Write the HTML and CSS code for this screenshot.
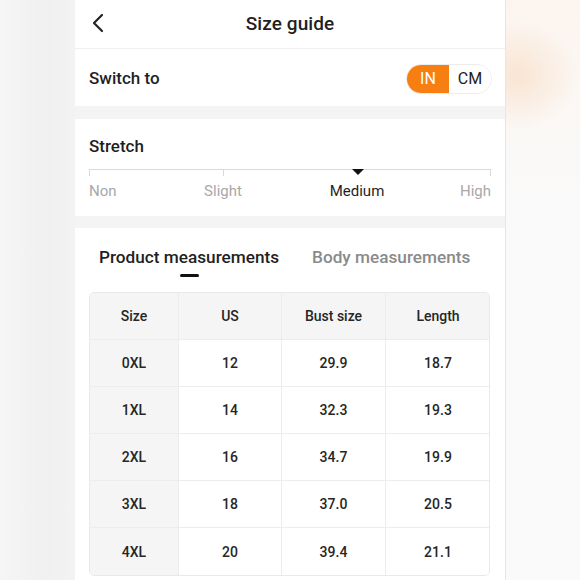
FILE: index.html
```html
<!DOCTYPE html>
<html>
<head>
<meta charset="utf-8">
<link rel="stylesheet" href="styles.css">
</head>
<body>
<div class="stage">
  <div class="phone">
    <header class="topbar">
      <svg class="back" width="12" height="20" viewBox="0 0 12 20"><polyline points="10,2 2,10 10,18" fill="none" stroke="#222" stroke-width="2.2" stroke-linecap="round" stroke-linejoin="round"/></svg>
      <h1 class="title">Size guide</h1>
    </header>
    <section class="switch-row">
      <span class="label">Switch to</span>
      <div class="toggle"><span class="opt on">IN</span><span class="opt">CM</span></div>
    </section>
    <div class="gap"></div>
    <section class="stretch">
      <div class="label">Stretch</div>
      <div class="track">
        <div class="seg"></div><div class="seg tick"></div><div class="seg"></div>
        <span class="marker"></span>
      </div>
      <div class="levels">
        <span class="lv non">Non</span>
        <span class="lv slight">Slight</span>
        <span class="lv medium">Medium</span>
        <span class="lv high">High</span>
      </div>
    </section>
    <div class="gap gap2"></div>
    <section class="measure">
      <div class="tabs">
        <div class="tab active">Product measurements<span class="bar"></span></div>
        <div class="tab">Body measurements</div>
      </div>
      <div class="table">
        <div class="c h first">Size</div><div class="c h">US</div><div class="c h">Bust size</div><div class="c h last">Length</div>
        <div class="c first">0XL</div><div class="c">12</div><div class="c">29.9</div><div class="c last">18.7</div>
        <div class="c first">1XL</div><div class="c">14</div><div class="c">32.3</div><div class="c last">19.3</div>
        <div class="c first">2XL</div><div class="c">16</div><div class="c">34.7</div><div class="c last">19.9</div>
        <div class="c first">3XL</div><div class="c">18</div><div class="c">37.0</div><div class="c last">20.5</div>
        <div class="c first b">4XL</div><div class="c b">20</div><div class="c b">39.4</div><div class="c last b">21.1</div>
      </div>
    </section>
  </div>
</div>
</body>
</html>
```

FILE: styles.css
```css
* { box-sizing: border-box; margin: 0; padding: 0; }
html, body { height: 100%; }
body {
  font-family: Roboto, "Liberation Sans", sans-serif;
  color: #1f1f1f;
  background:
    radial-gradient(ellipse 60px 55px at 518px 75px, rgba(248, 224, 202, 0.8), rgba(250, 235, 222, 0) 100%),
    linear-gradient(to bottom, #fcf5ef 0, #fafafa 220px, #fafafa 100%);
  overflow: hidden;
}
.stage {
  display: flex;
  justify-content: center;
  height: 580px;
  background: linear-gradient(to right, #f6f6f6 0, #f0f0f0 45px, #f3f3f3 75px, rgba(250,250,250,0) 75px);
}
.phone {
  width: 431px;
  margin-left: 1px;
  background: #f4f4f4;
  border-right: 1px solid #e6e6e6;
  display: flex;
  flex-direction: column;
}
.topbar {
  height: 49px;
  background: #fff;
  border-bottom: 1px solid #efefef;
  display: flex;
  align-items: center;
  justify-content: center;
  position: relative;
}
.back { position: absolute; left: 17px; top: 13px; }
.title { font-size: 19px; font-weight: 500; letter-spacing: 0.1px; margin-top: -1px; }
.switch-row {
  height: 57px;
  background: #fff;
  display: flex;
  align-items: center;
  justify-content: space-between;
  padding: 0 13px 0 14px;
}
.label { font-size: 17px; font-weight: 500; color: #1f1f1f; }
.switch-row .label { margin-top: 1px; }
.toggle {
  display: flex;
  height: 30px;
  border: 1px solid #ececec;
  border-radius: 15px;
  overflow: hidden;
  margin-top: 2px;
}
.opt {
  width: 42px;
  display: flex;
  align-items: center;
  justify-content: center;
  font-size: 16px;
  color: #222;
  background: #fff;
}
.opt.on { background: #f77f12; color: #fff; }
.gap { height: 13px; background: #f4f4f4; }
.gap2 { height: 12px; }
.stretch {
  height: 97px;
  background: #fff;
  padding: 17px 14px 0;
}
.track {
  position: relative;
  display: grid;
  grid-template-columns: repeat(3, 1fr);
  height: 7px;
  margin-top: 13px;
  border-top: 1px solid #d9d9d9;
  border-left: 1px solid #d9d9d9;
  border-right: 1px solid #d9d9d9;
}
.seg.tick { border-left: 1px solid #d9d9d9; }
.marker {
  position: absolute;
  left: 268px;
  top: -1px;
  margin-left: -6px;
  width: 0; height: 0;
  border-left: 6px solid transparent;
  border-right: 6px solid transparent;
  border-top: 6px solid #111;
}
.levels {
  display: grid;
  grid-template-columns: repeat(6, 67px);
  font-size: 15px;
  color: #a8a8a8;
  margin-top: 6px;
}
.lv { white-space: nowrap; }
.non { grid-column: 1; }
.slight { grid-column: 2 / span 2; text-align: center; }
.medium { grid-column: 4 / span 2; text-align: center; color: #1f1f1f; }
.high { grid-column: 6; text-align: right; }
.measure {
  flex: 1;
  background: #fff;
  padding: 0 14px;
}
.tabs {
  display: flex;
  height: 64px;
  padding-left: 10px;
  gap: 33px;
  padding-top: 19px;
}
.tab {
  position: relative;
  font-size: 17.2px;
  font-weight: 500;
  color: #8a8a8a;
  height: 22px;
}
.tab.active { color: #1f1f1f; }
.bar {
  position: absolute;
  left: 81px;
  top: 27px;
  width: 19px;
  height: 3px;
  border-radius: 2px;
  background: #111;
}
.table {
  display: grid;
  grid-template-columns: 89px 103px 104px 104px;
  grid-auto-rows: 47px;
  width: 401px;
  border: 1px solid #e9e9e9;
  border-radius: 5px;
  overflow: hidden;
}
.c {
  display: flex;
  align-items: center;
  justify-content: center;
  font-size: 14px;
  font-weight: 500;
  color: #262626;
  background: #fff;
  border-right: 1px solid #ededed;
  border-bottom: 1px solid #ededed;
}
.c.last { border-right: none; }
.c.b { border-bottom: none; }
.c.h, .c.first { background: #f5f5f5; }
```
